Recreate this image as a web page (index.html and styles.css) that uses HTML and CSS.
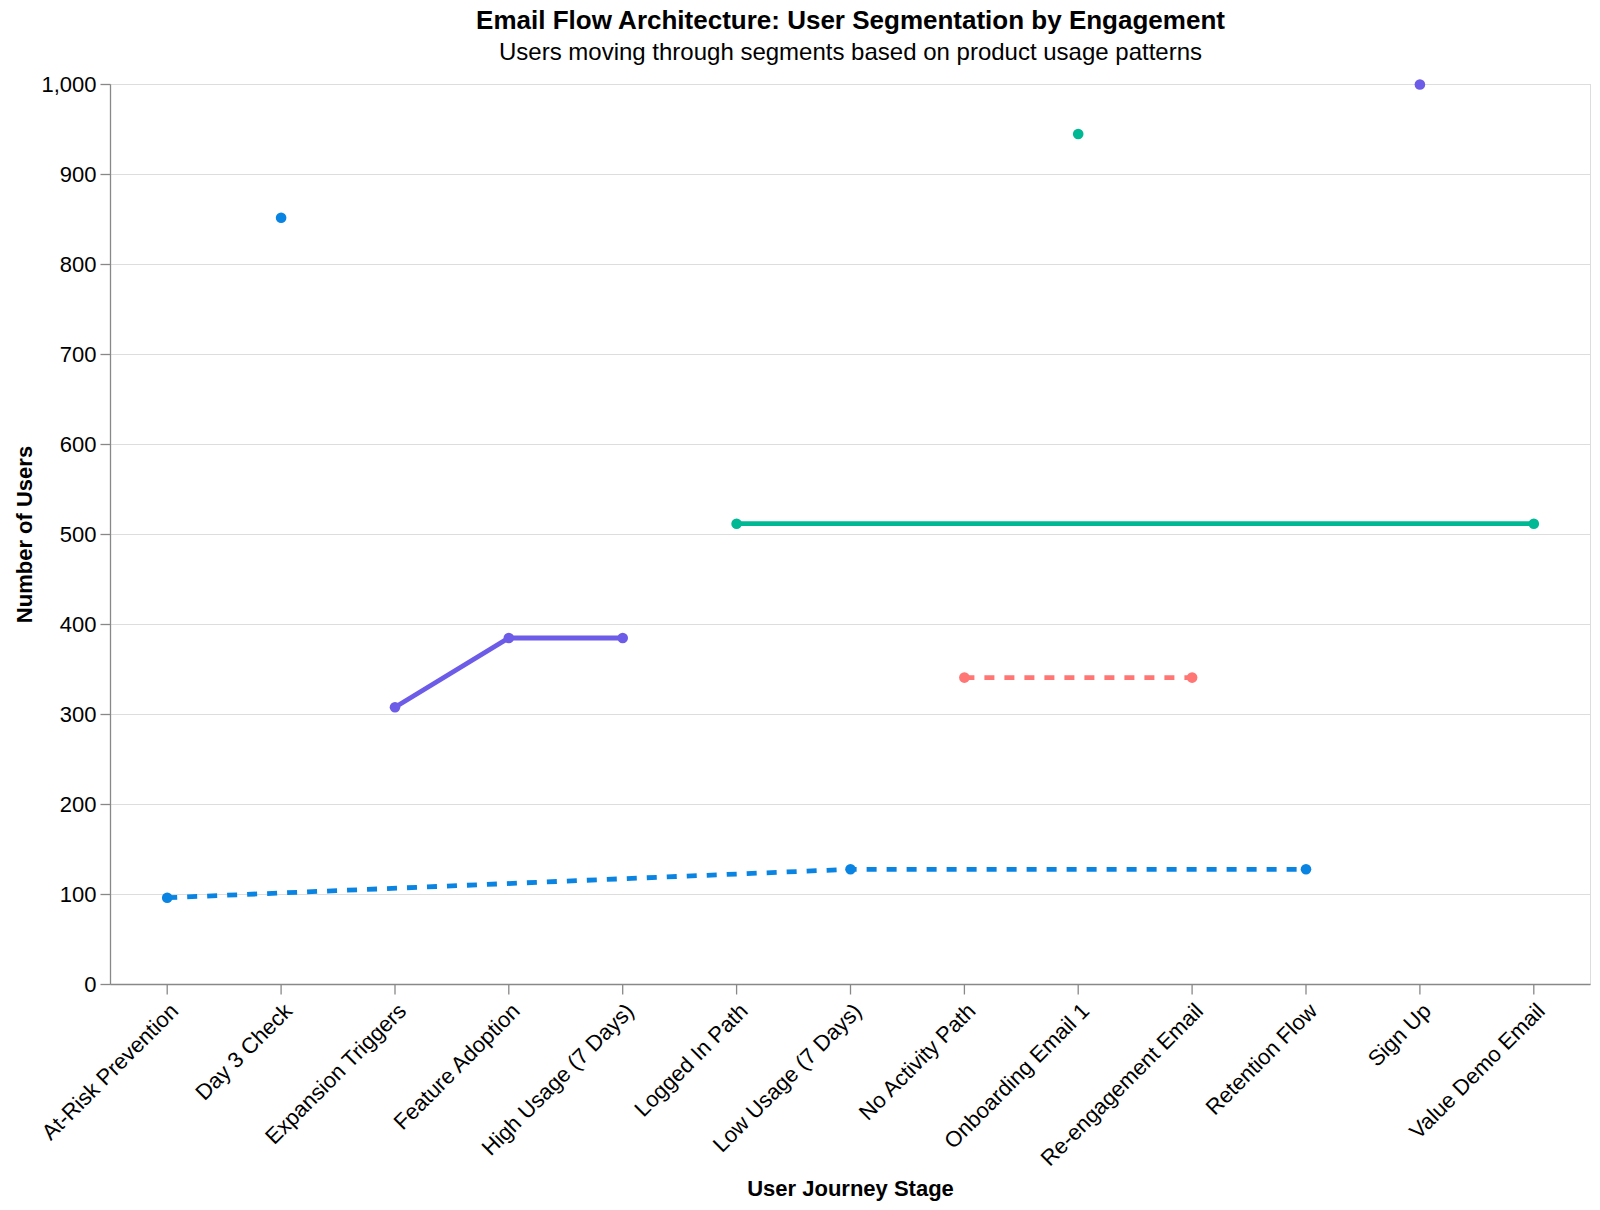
FILE: index.html
```html
<!DOCTYPE html>
<html lang="en">
<head>
<meta charset="utf-8">
<title>Email Flow Architecture</title>
<link rel="stylesheet" href="styles.css">
</head>
<body>
<div class="chart">
  <header class="chart-head">
    <h1 class="chart-title">Email Flow Architecture: User Segmentation by Engagement</h1>
    <p class="chart-subtitle">Users moving through segments based on product usage patterns</p>
  </header>
  <svg class="plot" width="1600" height="1140" viewBox="0 70 1600 1140" xmlns="http://www.w3.org/2000/svg">
    <g class="grid">
      <line x1="110.5" x2="1590.5" y1="984.5" y2="984.5"/>
      <line x1="110.5" x2="1590.5" y1="894.5" y2="894.5"/>
      <line x1="110.5" x2="1590.5" y1="804.5" y2="804.5"/>
      <line x1="110.5" x2="1590.5" y1="714.5" y2="714.5"/>
      <line x1="110.5" x2="1590.5" y1="624.5" y2="624.5"/>
      <line x1="110.5" x2="1590.5" y1="534.5" y2="534.5"/>
      <line x1="110.5" x2="1590.5" y1="444.5" y2="444.5"/>
      <line x1="110.5" x2="1590.5" y1="354.5" y2="354.5"/>
      <line x1="110.5" x2="1590.5" y1="264.5" y2="264.5"/>
      <line x1="110.5" x2="1590.5" y1="174.5" y2="174.5"/>
      <line x1="110.5" x2="1590.5" y1="84.5" y2="84.5"/>
    </g>
    <rect class="frame" x="110.5" y="84.5" width="1480" height="900"/>

    <g class="ticks">
      <line x1="100.5" x2="110.5" y1="984.5" y2="984.5"/>
      <line x1="100.5" x2="110.5" y1="894.5" y2="894.5"/>
      <line x1="100.5" x2="110.5" y1="804.5" y2="804.5"/>
      <line x1="100.5" x2="110.5" y1="714.5" y2="714.5"/>
      <line x1="100.5" x2="110.5" y1="624.5" y2="624.5"/>
      <line x1="100.5" x2="110.5" y1="534.5" y2="534.5"/>
      <line x1="100.5" x2="110.5" y1="444.5" y2="444.5"/>
      <line x1="100.5" x2="110.5" y1="354.5" y2="354.5"/>
      <line x1="100.5" x2="110.5" y1="264.5" y2="264.5"/>
      <line x1="100.5" x2="110.5" y1="174.5" y2="174.5"/>
      <line x1="100.5" x2="110.5" y1="84.5" y2="84.5"/>

      <line x1="167.2" x2="167.2" y1="984.5" y2="994.5"/>
      <line x1="281.1" x2="281.1" y1="984.5" y2="994.5"/>
      <line x1="395.0" x2="395.0" y1="984.5" y2="994.5"/>
      <line x1="508.8" x2="508.8" y1="984.5" y2="994.5"/>
      <line x1="622.7" x2="622.7" y1="984.5" y2="994.5"/>
      <line x1="736.6" x2="736.6" y1="984.5" y2="994.5"/>
      <line x1="850.5" x2="850.5" y1="984.5" y2="994.5"/>
      <line x1="964.4" x2="964.4" y1="984.5" y2="994.5"/>
      <line x1="1078.2" x2="1078.2" y1="984.5" y2="994.5"/>
      <line x1="1192.1" x2="1192.1" y1="984.5" y2="994.5"/>
      <line x1="1306.0" x2="1306.0" y1="984.5" y2="994.5"/>
      <line x1="1419.9" x2="1419.9" y1="984.5" y2="994.5"/>
      <line x1="1533.8" x2="1533.8" y1="984.5" y2="994.5"/>
    </g>
    <g class="domain">
      <line x1="110.5" x2="110.5" y1="84.5" y2="984.5"/>
      <line x1="110.5" x2="1590.5" y1="984.5" y2="984.5"/>
    </g>

    <g class="ylabels">
      <text x="96.5" y="992.4">0</text>
      <text x="96.5" y="902.4">100</text>
      <text x="96.5" y="812.4">200</text>
      <text x="96.5" y="722.4">300</text>
      <text x="96.5" y="632.4">400</text>
      <text x="96.5" y="542.4">500</text>
      <text x="96.5" y="452.4">600</text>
      <text x="96.5" y="362.4">700</text>
      <text x="96.5" y="272.4">800</text>
      <text x="96.5" y="182.4">900</text>
      <text x="96.5" y="92.4">1,000</text>
    </g>

    <g class="xlabels">
      <text transform="translate(167.2 1000) rotate(-45)" y="17.6">At-Risk Prevention</text>
      <text transform="translate(281.1 1000) rotate(-45)" y="17.6">Day 3 Check</text>
      <text transform="translate(395.0 1000) rotate(-45)" y="17.6">Expansion Triggers</text>
      <text transform="translate(508.8 1000) rotate(-45)" y="17.6">Feature Adoption</text>
      <text transform="translate(622.7 1000) rotate(-45)" y="17.6">High Usage (7 Days)</text>
      <text transform="translate(736.6 1000) rotate(-45)" y="17.6">Logged In Path</text>
      <text transform="translate(850.5 1000) rotate(-45)" y="17.6">Low Usage (7 Days)</text>
      <text transform="translate(964.4 1000) rotate(-45)" y="17.6">No Activity Path</text>
      <text transform="translate(1078.2 1000) rotate(-45)" y="17.6">Onboarding Email 1</text>
      <text transform="translate(1192.1 1000) rotate(-45)" y="17.6">Re-engagement Email</text>
      <text transform="translate(1306.0 1000) rotate(-45)" y="17.6">Retention Flow</text>
      <text transform="translate(1419.9 1000) rotate(-45)" y="17.6">Sign Up</text>
      <text transform="translate(1533.8 1000) rotate(-45)" y="17.6">Value Demo Email</text>
    </g>

    <text class="axis-title" x="850.5" y="1195.5">User Journey Stage</text>
    <text class="axis-title" transform="translate(31.5 534.5) rotate(-90)">Number of Users</text>

    <g class="series">
      <path class="line dashed c-blue" d="M167.2,897.7 L850.5,869.3 L1306.0,869.3"/>
      <path class="line c-purple" d="M395.0,707.3 L508.8,638 L622.7,638"/>
      <path class="line c-green" d="M736.6,523.7 L1533.8,523.7"/>
      <path class="line dashed c-pink" d="M964.4,677.6 L1192.1,677.6"/>

      <circle class="dot f-blue" cx="167.2" cy="897.7" r="5.3"/>
      <circle class="dot f-blue" cx="850.5" cy="869.3" r="5.3"/>
      <circle class="dot f-blue" cx="1306.0" cy="869.3" r="5.3"/>
      <circle class="dot f-blue" cx="281.1" cy="217.7" r="5.3"/>

      <circle class="dot f-purple" cx="395.0" cy="707.3" r="5.3"/>
      <circle class="dot f-purple" cx="508.8" cy="638" r="5.3"/>
      <circle class="dot f-purple" cx="622.7" cy="638" r="5.3"/>
      <circle class="dot f-purple" cx="1419.9" cy="84.5" r="5.3"/>

      <circle class="dot f-green" cx="736.6" cy="523.7" r="5.3"/>
      <circle class="dot f-green" cx="1533.8" cy="523.7" r="5.3"/>
      <circle class="dot f-green" cx="1078.2" cy="134" r="5.3"/>

      <circle class="dot f-pink" cx="964.4" cy="677.6" r="5.3"/>
      <circle class="dot f-pink" cx="1192.1" cy="677.6" r="5.3"/>
    </g>
  </svg>
</div>
</body>
</html>
```

FILE: styles.css
```css
html, body {
  margin: 0;
  padding: 0;
  background: #ffffff;
}

body {
  width: 1600px;
  height: 1210px;
  overflow: hidden;
  font-family: "Liberation Sans", Arial, sans-serif;
  color: #000;
}

.chart {
  width: 1600px;
}

.chart-head {
  box-sizing: border-box;
  height: 70px;
  width: 1480px;
  margin-left: 110.5px;
  padding-top: 5px;
  text-align: center;
}

.chart-title {
  margin: 0;
  font-size: 26px;
  line-height: 30px;
  font-weight: bold;
}

.chart-subtitle {
  margin: 2px 0 0;
  font-size: 24px;
  line-height: 30px;
  font-weight: normal;
}

.plot {
  display: block;
}

.grid line {
  stroke: #dddddd;
  stroke-width: 1;
}

.frame {
  fill: none;
  stroke: #dddddd;
  stroke-width: 1;
}

.ticks line,
.domain line {
  stroke: #888888;
  stroke-width: 1.3;
}

.ylabels text {
  font-family: "Liberation Sans", Arial, sans-serif;
  font-size: 22px;
  text-anchor: end;
  fill: #000;
}

.xlabels text {
  font-family: "Liberation Sans", Arial, sans-serif;
  font-size: 22px;
  text-anchor: end;
  fill: #000;
}

.axis-title {
  font-family: "Liberation Sans", Arial, sans-serif;
  font-size: 22px;
  font-weight: bold;
  text-anchor: middle;
  fill: #000;
}

.line {
  fill: none;
  stroke-width: 4.8;
  stroke-linecap: butt;
  stroke-linejoin: miter;
}

.dashed {
  stroke-dasharray: 10 10;
}

.c-blue { stroke: #0984e3; }
.c-purple { stroke: #6c5ce7; }
.c-green { stroke: #00b894; }
.c-pink { stroke: #ff7675; }

.f-blue { fill: #0984e3; }
.f-purple { fill: #6c5ce7; }
.f-green { fill: #00b894; }
.f-pink { fill: #ff7675; }
```
